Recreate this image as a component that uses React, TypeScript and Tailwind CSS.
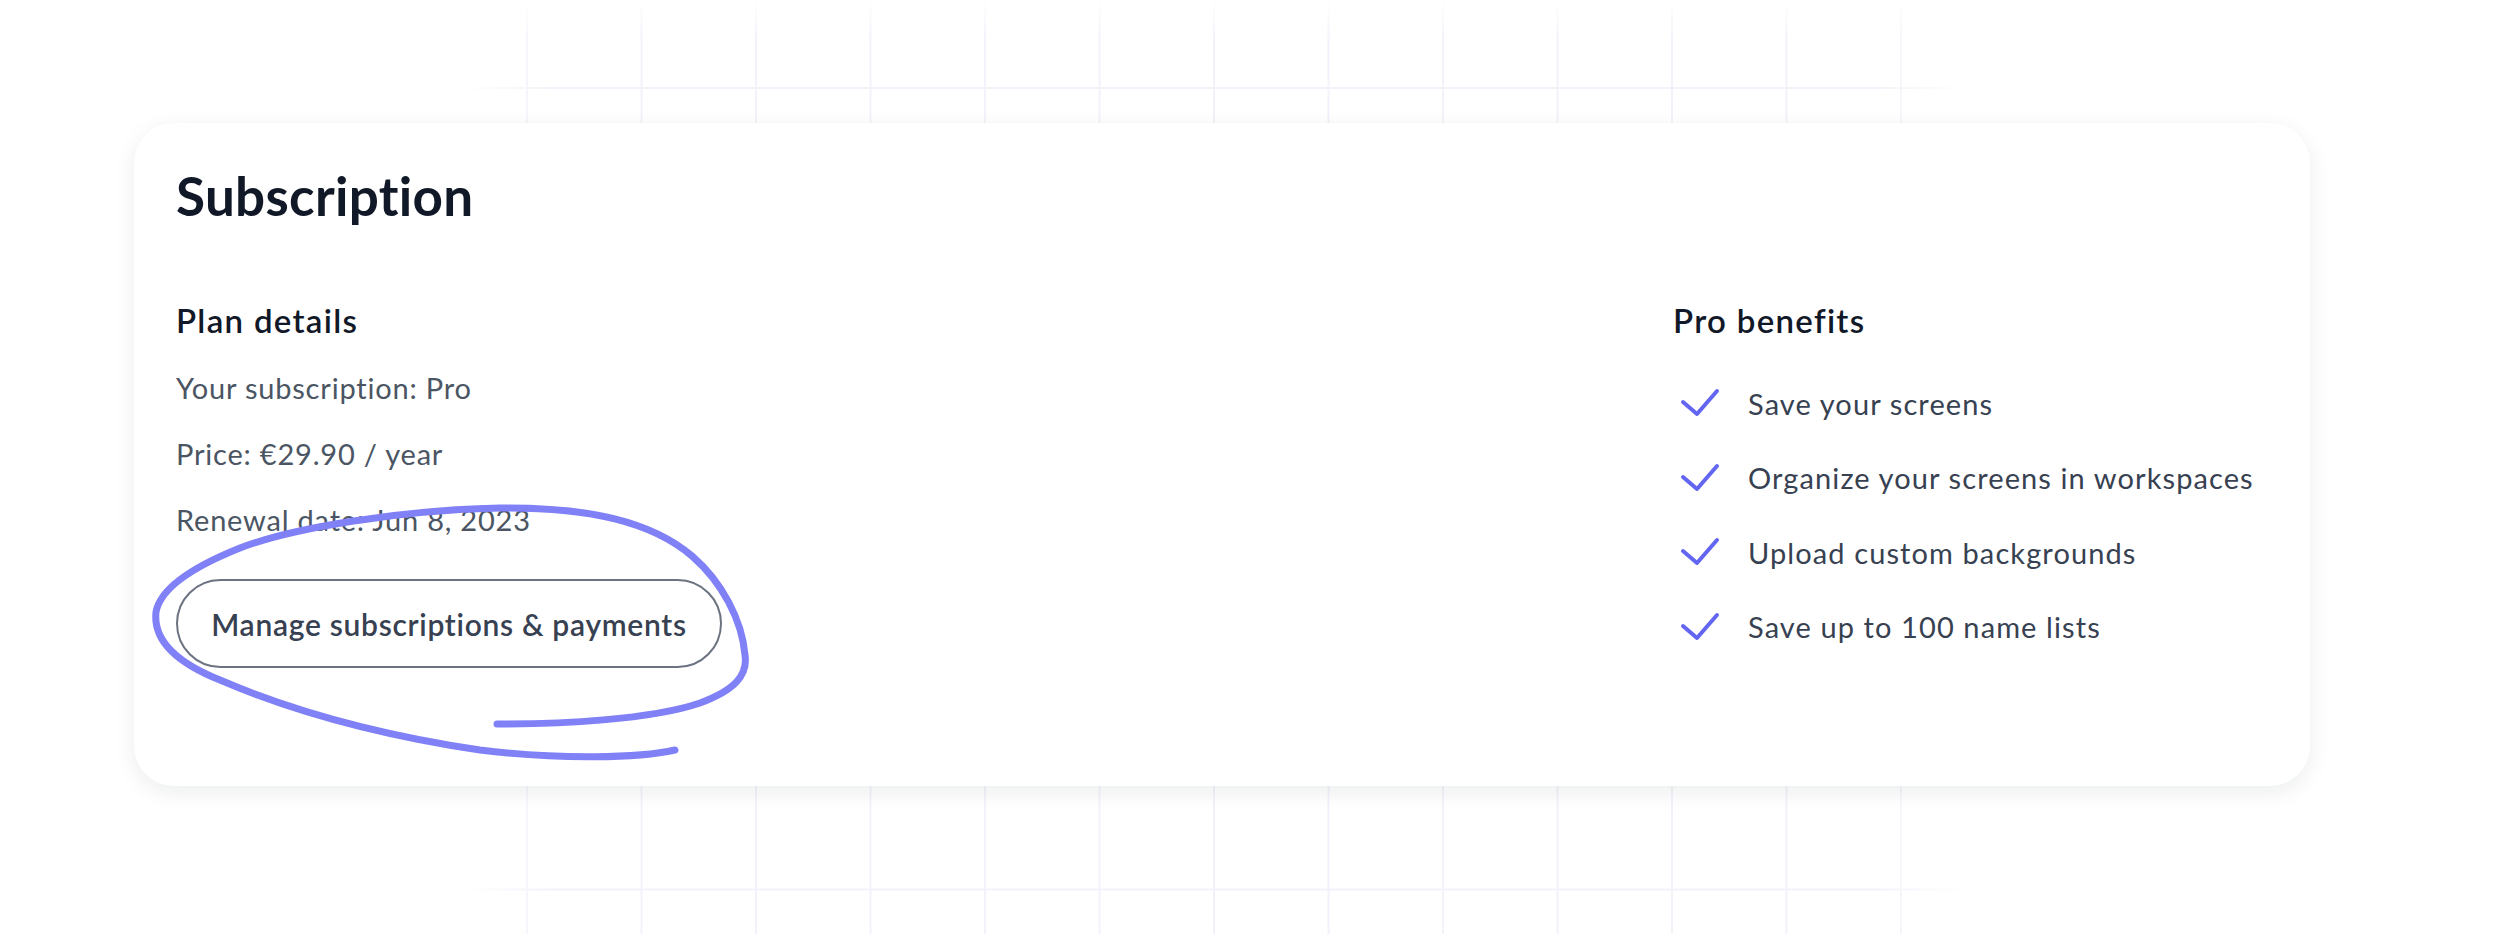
import React from 'react';

const planLines = ['Your subscription: Pro', 'Price: €29.90 / year', 'Renewal date: Jun 8, 2023'];

const benefits = [
  'Save your screens',
  'Organize your screens in workspaces',
  'Upload custom backgrounds',
  'Save up to 100 name lists',
];

function CheckMark() {
  return (
    <svg width="40" height="30" viewBox="0 0 40 30" fill="none" className="ml-[7px] shrink-0">
      <path
        d="M3 14 L17 26 L37 3"
        stroke="#6366f1"
        strokeWidth="4"
        strokeLinecap="round"
        strokeLinejoin="round"
      />
    </svg>
  );
}

// hand drawn circle around the manage button
function Scribble() {
  return (
    <svg
      className="pointer-events-none absolute left-0 top-0"
      width="2500"
      height="934"
      viewBox="0 0 2500 934"
      fill="none"
    >
      <path
        d="M497 724 C560 724 650 720 700 703 C735 690 748 675 745 655 C742 620 722 582 692 556 C652 522 590 507 500 508 C400 510 292 528 240 548 C190 568 160 590 156 612 C153 640 175 662 220 680 C290 710 380 735 480 750 C560 760 640 758 675 750"
        stroke="#8080f7"
        strokeWidth="7"
        strokeLinecap="round"
        strokeLinejoin="round"
      />
    </svg>
  );
}

export default function App() {
  return (
    <div className="relative h-[934px] w-[2500px] overflow-hidden bg-white font-['Lato','Noto_Sans',sans-serif]">
      {/* faint grid behind the card */}
      <div className="absolute left-[462px] top-0 h-full w-[1505px] [mask-image:linear-gradient(to_right,transparent,black_6%,black_94%,transparent)]">
        <div className="h-full w-full [mask-image:linear-gradient(to_bottom,transparent,black_40px)] [background-image:linear-gradient(to_right,#f2f3fa_2px,transparent_2px),linear-gradient(to_bottom,#f2f3fa_2px,transparent_2px)] [background-size:114.5px_114.5px] [background-position:64px_87px]" />
      </div>

      <div className="relative pl-[134px] pt-[123px]">
        <section className="flex h-[663px] w-[2176px] flex-col rounded-[40px] bg-white pl-[42px] pr-[44px] pt-[46px] shadow-[0_6px_22px_rgba(17,24,39,0.08)]">
          <h1 className="text-[53px] font-bold leading-none tracking-[0.3px] text-[#111827]">Subscription</h1>

          <div className="mt-[82px] flex">
            <div className="flex flex-1 flex-col">
              <h2 className="text-[33px] font-semibold leading-none tracking-[1.3px] text-[#111827]">Plan details</h2>
              <div className="mt-[36px] flex flex-col gap-[37px]">
                {planLines.map((line) => (
                  <p key={line} className="text-[29px] leading-none tracking-[0.8px] text-[#4b5563]">
                    {line}
                  </p>
                ))}
              </div>
              <button className="mt-[45px] flex h-[89px] w-[546px] items-center justify-center rounded-full border-2 border-[#6b7280] bg-white text-[30px] font-semibold leading-none tracking-[0.7px] text-[#374151]">
                Manage subscriptions &amp; payments
              </button>
            </div>

            <div className="flex w-[593px] flex-col">
              <h2 className="text-[33px] font-semibold leading-none tracking-[1.3px] text-[#111827]">Pro benefits</h2>
              <ul className="mt-[51px] flex flex-col gap-[44.5px]">
                {benefits.map((b) => (
                  <li key={b} className="flex h-[30px] items-center gap-[28px]">
                    <CheckMark />
                    <span className="text-[29px] leading-none tracking-[1.1px] text-[#374151]">{b}</span>
                  </li>
                ))}
              </ul>
            </div>
          </div>
        </section>
      </div>

      <Scribble />
    </div>
  );
}
